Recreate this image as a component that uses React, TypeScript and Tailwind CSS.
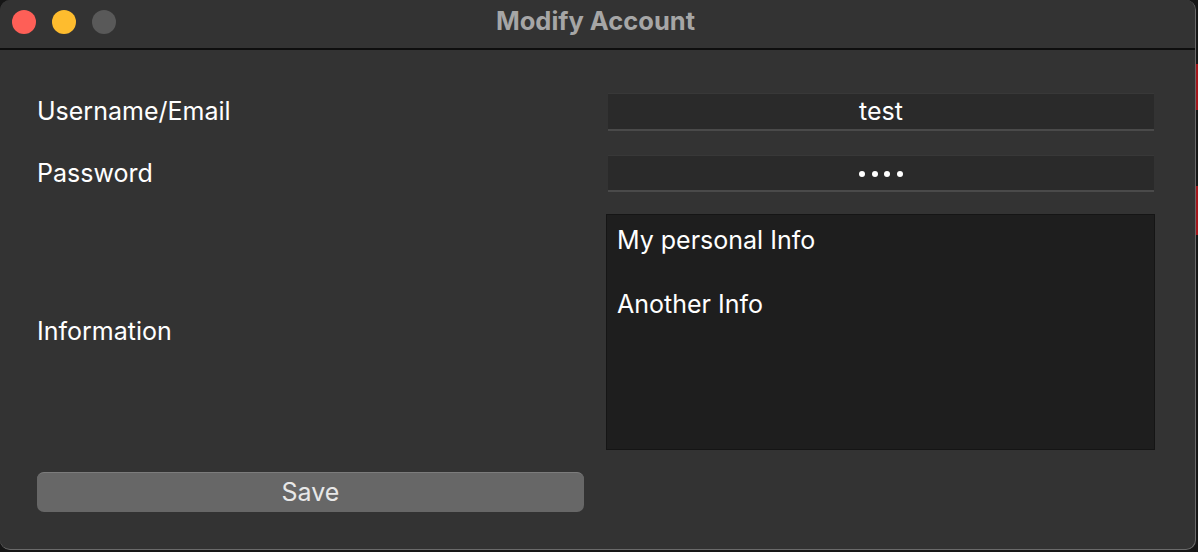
import React from "react";

export default function App() {
  const font = { fontFamily: 'Inter, "Noto Sans", "Liberation Sans", sans-serif' };
  return (
    <div className="relative w-[1198px] h-[552px] bg-[#161616] overflow-hidden" style={font}>
      <div className="absolute right-0 top-[64px] w-[2px] h-[46px] bg-[#a3161a]" />
      <div className="absolute right-0 top-[186px] w-[2px] h-[49px] bg-[#a3161a]" />
      <div className="w-[1196px] h-[550px] bg-[#333333] rounded-[10px] border-r border-b border-[#6a6a6a] flex flex-col overflow-hidden">
        {/* Title bar */}
        <div className="relative h-[50px] shrink-0 flex items-center justify-center border-b-2 border-[#0e0e0e] bg-[#333333]">
          <div className="absolute left-[12px] top-[10px] flex gap-[16px]">
            <div className="w-[24px] h-[24px] rounded-full bg-[#fe5f57]" />
            <div className="w-[24px] h-[24px] rounded-full bg-[#febc2e]" />
            <div className="w-[24px] h-[24px] rounded-full bg-[#595959]" />
          </div>
          <div className="text-[25.5px] leading-[30px] font-bold text-[#a6a6a6] ml-[-4px] mt-[-6px]">Modify Account</div>
        </div>

        {/* Content */}
        <div className="flex flex-col pt-[43px] pl-[37px]">
          <div className="flex items-center h-[38px]">
            <div className="w-[571px] text-[25px] text-white">Username/Email</div>
            <div className="w-[546px] h-[38px] bg-[#2a2a2a] border-t border-[#383838] border-b-2 border-b-[#4a4a4a] flex items-center justify-center text-[25px] text-white">
              test
            </div>
          </div>

          <div className="flex items-center h-[37px] mt-[24px]">
            <div className="w-[571px] text-[25px] text-white">Password</div>
            <div className="w-[546px] h-[37px] bg-[#2a2a2a] border-t border-[#383838] border-b-2 border-b-[#4a4a4a] flex items-center justify-center gap-[6.5px] pt-[2px]">
              <div className="w-[6px] h-[6px] rounded-full bg-white" />
              <div className="w-[6px] h-[6px] rounded-full bg-white" />
              <div className="w-[6px] h-[6px] rounded-full bg-white" />
              <div className="w-[6px] h-[6px] rounded-full bg-white" />
            </div>
          </div>

          <div className="flex items-center h-[236px] mt-[22px]">
            <div className="w-[569px] text-[25px] text-white">Information</div>
            <div className="w-[549px] h-[236px] bg-[#1e1e1e] border border-[#151515] pt-[9px] pl-[10px] text-[25px] leading-[32px] text-white whitespace-pre">
              {"My personal Info\n\nAnother Info"}
            </div>
          </div>

          <div className="mt-[22px] w-[547px] h-[40px] rounded-[7px] bg-[#676767] border-t border-[#7c7c7c] flex items-center justify-center text-[25px] text-[#e8e8e8]">
            Save
          </div>
        </div>
      </div>
    </div>
  );
}
